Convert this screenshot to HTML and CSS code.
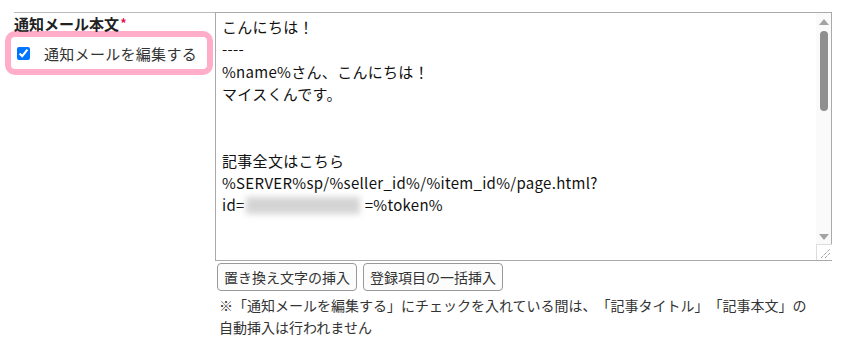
FILE: index.html
```html
<!DOCTYPE html>
<html lang="ja">
<head>
    <meta charset="UTF-8">
    <title>通知メール設定</title>
    <link rel="stylesheet" href="styles.css">
</head>
<body>
    <div class="form-row">
        <div class="form-label">
            <div class="label-title">通知メール本文<span class="required">*</span></div>
            <label class="edit-toggle">
                <input type="checkbox" checked>
                <span>通知メールを編集する</span>
            </label>
        </div>
        <div class="form-field">
            <div class="mail-box">
                <div class="mail-text">こんにちは！
----
%name%さん、こんにちは！
マイスくんです。


記事全文はこちら
%SERVER%sp/%seller_id%/%item_id%/page.html?
id=<span class="masked"></span>=%token%</div>
                <div class="scrollbar">
                    <div class="arrow-up"></div>
                    <div class="thumb"></div>
                    <div class="track"></div>
                    <div class="arrow-down"></div>
                    <div class="resizer">
                        <svg width="14" height="14" viewBox="0 0 14 14">
                            <path d="M3 12 L12 3 M7 12 L12 7" stroke="#777" stroke-width="1" stroke-dasharray="1 1"/>
                        </svg>
                    </div>
                </div>
            </div>
            <div class="insert-buttons">
                <button type="button">置き換え文字の挿入</button>
                <button type="button">登録項目の一括挿入</button>
            </div>
            <p class="note">※「通知メールを編集する」にチェックを入れている間は、「記事タイトル」「記事本文」の<br>自動挿入は行われません</p>
        </div>
    </div>
</body>
</html>
```

FILE: styles.css
```css
body {
    font-family: "Noto Sans CJK JP", "Noto Sans", sans-serif;
    background-color: white;
    color: #222;
    margin: 0;
    padding: 12px 0 0 14px;
    text-spacing-trim: space-all;
}
.form-row {
    display: flex;
    width: 818px;
    border-top: 1px solid #bbb;
}
.form-label {
    width: 201px;
    flex-shrink: 0;
}
.label-title {
    font-size: 15px;
    font-weight: bold;
    line-height: 20px;
    padding-top: 1px;
    color: #222;
}
.required {
    color: #e0003c;
    font-weight: normal;
    margin-left: 1px;
}
.edit-toggle {
    display: flex;
    align-items: center;
    gap: 14px;
    margin: -3px 0 0 -9px;
    width: 190px;
    height: 32px;
    padding: 0 0 0 6px;
    border: 6px solid #ffadc9;
    border-radius: 10px;
    font-size: 15px;
    letter-spacing: 0.3px;
    color: #333;
}
.edit-toggle input {
    width: 13px;
    height: 13px;
    margin: 0;
    accent-color: #0075ff;
}
.form-field {
    flex: 1;
    margin-top: -1px;
}
.mail-box {
    display: flex;
    height: 247px;
    border: 1px solid #aaa;
}
.mail-text {
    flex: 1;
    overflow: hidden;
    padding: 3px 6px;
    font-size: 15px;
    line-height: 22.3px;
    letter-spacing: 0.3px;
    white-space: pre-wrap;
    color: #111;
}
.masked {
    display: inline-block;
    width: 114px;
    height: 17px;
    margin: 0 5px 0 1px;
    vertical-align: -3px;
    background-color: #d4d4d4;
    filter: blur(3px);
}
.scrollbar {
    width: 15px;
    display: flex;
    flex-direction: column;
    align-items: center;
    background-color: #fafafa;
}
.arrow-up, .arrow-down {
    width: 0;
    height: 0;
    border-left: 5px solid transparent;
    border-right: 5px solid transparent;
}
.arrow-up {
    margin-top: 6px;
    border-bottom: 6px solid #a3a3a3;
}
.arrow-down {
    margin-bottom: 4px;
    border-top: 6px solid #a3a3a3;
}
.thumb {
    margin-top: 6px;
    width: 8px;
    height: 80px;
    border-radius: 4px;
    background-color: #8f8f8f;
}
.track {
    flex: 1;
}
.resizer {
    width: 15px;
    height: 15px;
    background-color: white;
    border-top: 1px solid #ddd;
    border-left: 1px solid #ddd;
    display: flex;
    align-items: flex-end;
    justify-content: flex-end;
}
.insert-buttons {
    display: flex;
    gap: 6px;
    margin: 2px 0 0 2px;
}
.insert-buttons button {
    font-family: inherit;
    font-size: 14px;
    line-height: 20px;
    color: #333;
    background-color: #fcfcfc;
    border: 1px solid #999;
    border-radius: 4px;
    height: 28px;
    padding: 0 6px;
}
.note {
    margin: 3px 0 0 4px;
    font-size: 14px;
    line-height: 22px;
    color: #333;
}
```
